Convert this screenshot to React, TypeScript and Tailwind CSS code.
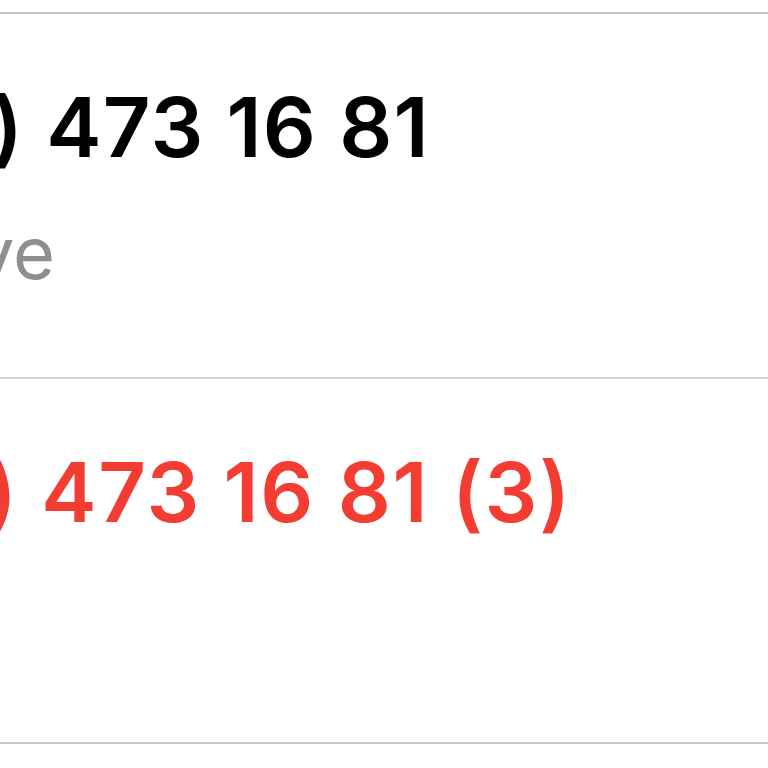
export default function App() {
  return (
    <div className="w-[768px] h-[768px] overflow-hidden bg-white" style={{ fontFamily: 'Inter, "Noto Sans", sans-serif' }}>
      <div className="h-[12px]" />
      <div className="h-[365px] border-t-2 border-[#c9c9cb] flex flex-col">
        <div className="mt-[72px] ml-[-8px] whitespace-nowrap text-[83px] leading-none font-semibold text-black tracking-[1.2px]">
          ) 473 16 81
        </div>
        <div className="mt-[48px] ml-[-26px] whitespace-nowrap text-[72px] leading-none text-[#8e8e93]">
          ve
        </div>
      </div>
      <div className="h-[365px] border-t-2 border-[#d4d4d6] flex flex-col">
        <div className="mt-[72px] ml-[-14px] whitespace-nowrap text-[83px] leading-none font-semibold text-[#f33d33] tracking-[1.7px]">
          ) 473 16 81 (3)
        </div>
      </div>
      <div className="border-t-2 border-[#c9c9cb]" />
    </div>
  );
}
